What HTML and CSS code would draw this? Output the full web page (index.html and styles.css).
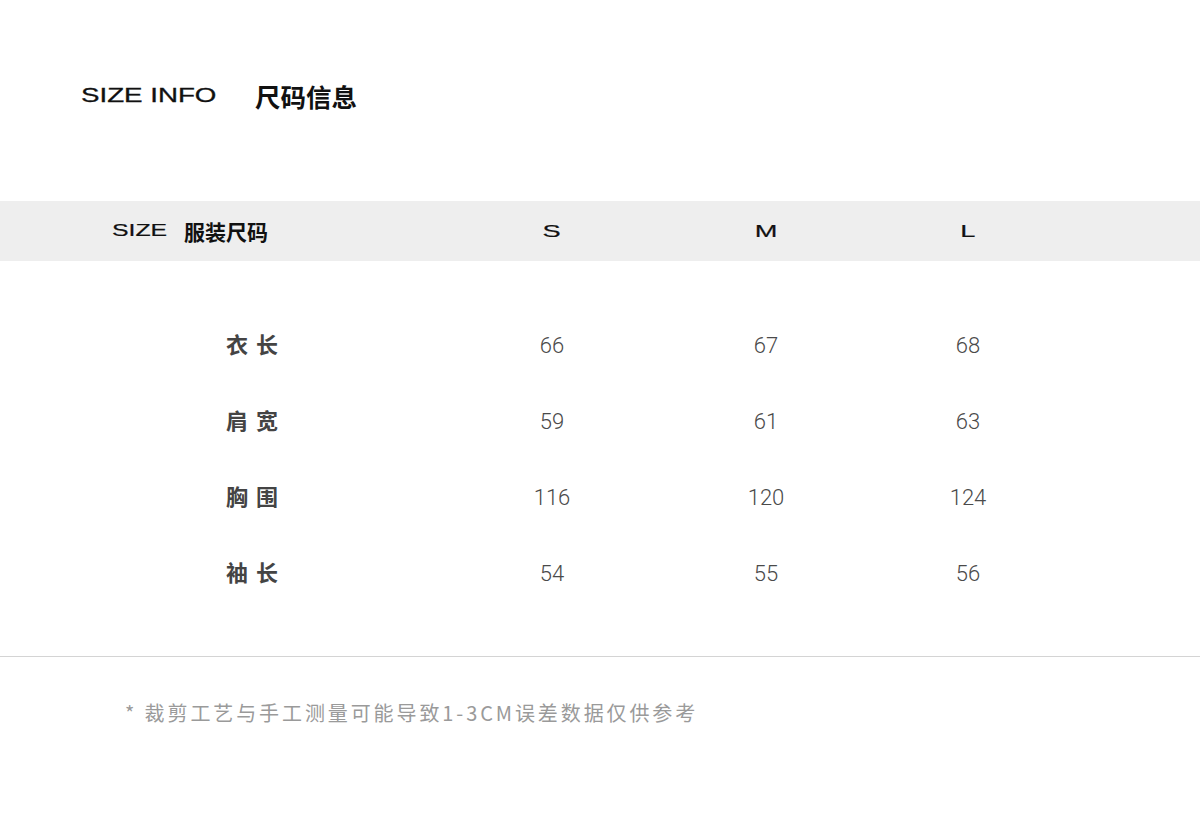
FILE: index.html
```html
<!DOCTYPE html>
<html lang="zh-CN">
<head>
<meta charset="utf-8">
<title>SIZE INFO 尺码信息</title>
<link rel="stylesheet" href="styles.css">
</head>
<body>
<div class="page">
  <div class="title">
    <span class="title-en"><span class="wide">SIZE INFO</span></span>
    <span class="title-cn">尺码信息</span>
  </div>

  <div class="thead">
    <div class="th-first"><span class="th-en"><span class="wide">SIZE</span></span><span class="th-cn">服装尺码</span></div>
    <div class="th-size"><span class="wide">S</span></div>
    <div class="th-size"><span class="wide">M</span></div>
    <div class="th-size"><span class="wide">L</span></div>
  </div>

  <div class="tbody">
    <div class="row">
      <div class="label">衣长</div><div class="val">66</div><div class="val">67</div><div class="val">68</div>
    </div>
    <div class="row">
      <div class="label">肩宽</div><div class="val">59</div><div class="val">61</div><div class="val">63</div>
    </div>
    <div class="row">
      <div class="label">胸围</div><div class="val">116</div><div class="val">120</div><div class="val">124</div>
    </div>
    <div class="row">
      <div class="label">袖长</div><div class="val">54</div><div class="val">55</div><div class="val">56</div>
    </div>
  </div>

  <div class="note">* 裁剪工艺与手工测量可能导致1-3CM误差数据仅供参考</div>
</div>
</body>
</html>
```

FILE: styles.css
```css
html, body {
  margin: 0;
  padding: 0;
  background: #ffffff;
}

.page {
  width: 1200px;
  height: 825px;
  font-family: "Noto Sans", "Noto Sans CJK SC", sans-serif;
  color: #111;
}

.wide {
  display: inline-block;
  transform-origin: left center;
}

.title {
  display: flex;
  align-items: center;
  padding: 78px 0 0 81px;
  height: 34px;
}

.title-en {
  width: 174px;
  font-family: "Liberation Sans", sans-serif;
  font-size: 19.5px;
  color: #111;
  -webkit-text-stroke: 0.3px #111;
}

.title-en .wide {
  transform: scaleX(1.42);
}

.title-cn {
  font-family: "Noto Sans CJK SC", sans-serif;
  font-size: 25.5px;
  font-weight: 700;
  color: #111;
}

.thead {
  margin-top: 89px;
  height: 60px;
  background: #eeeeee;
  display: grid;
  grid-template-columns: 447px 210px 218px 186px 1fr;
  align-items: center;
}

.th-first {
  padding-left: 112px;
  display: flex;
  align-items: center;
}

.th-en {
  width: 72px;
  font-family: "Liberation Sans", sans-serif;
  font-size: 16px;
  color: #111;
  -webkit-text-stroke: 0.2px #111;
}

.th-en .wide {
  transform: scaleX(1.55);
}

.th-cn {
  font-family: "Noto Sans CJK SC", sans-serif;
  font-size: 21px;
  font-weight: 700;
  color: #111;
}

.th-size {
  text-align: center;
  font-family: "Liberation Sans", sans-serif;
  font-size: 17px;
  color: #111;
  padding-top: 2px;
  -webkit-text-stroke: 0.2px #111;
}

.th-size .wide {
  transform: scaleX(1.6);
  transform-origin: center center;
}

.tbody {
  padding: 44px 0 47px;
  border-bottom: 1px solid #d4d4d4;
}

.row {
  display: grid;
  grid-template-columns: 447px 210px 218px 186px 1fr;
  align-items: center;
  height: 76px;
}

.label {
  padding-left: 226px;
  font-family: "Noto Sans CJK SC", sans-serif;
  font-size: 22px;
  font-weight: 700;
  letter-spacing: 8px;
  color: #444;
}

.val {
  text-align: center;
  font-family: Roboto, "Noto Sans", sans-serif;
  font-weight: 300;
  font-size: 22px;
  color: #4a4a4a;
  padding-top: 4px;
}

.note {
  padding: 41px 0 0 125px;
  font-family: "Noto Sans CJK SC", sans-serif;
  font-size: 20px;
  letter-spacing: 2.9px;
  color: #9a9a9a;
}
```
